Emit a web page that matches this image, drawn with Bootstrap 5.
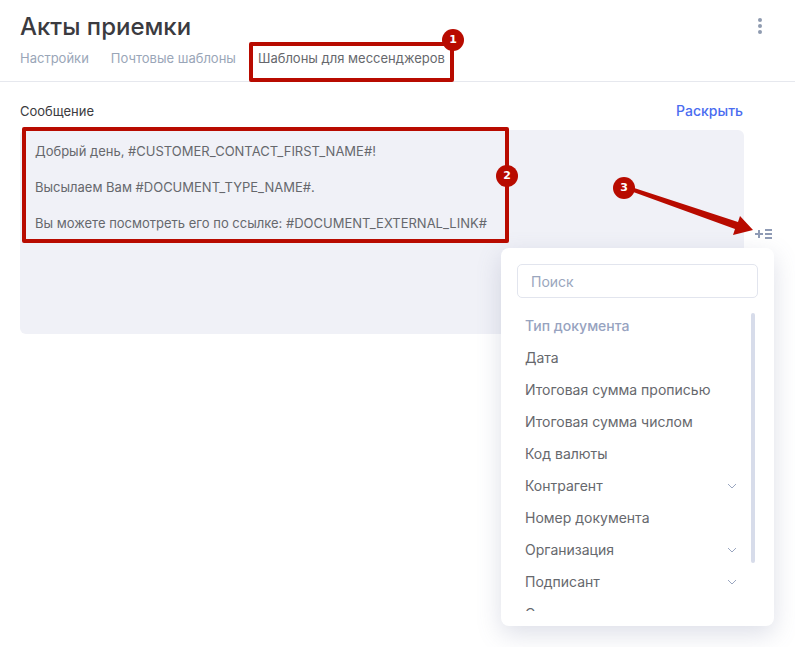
<!DOCTYPE html>
<html lang="ru">
<head>
<meta charset="utf-8">
<title>Акты приемки</title>
<link href="https://cdn.jsdelivr.net/npm/bootstrap@5.3.0/dist/css/bootstrap.min.css" rel="stylesheet">
<style>
html,body{height:647px;overflow:hidden}
body{font-family:Inter,"Noto Sans",sans-serif;font-size:13px;color:#66686d;background:#fff;position:relative}
.pg-head{height:82px;border-bottom:1px solid #e6e8ee;padding:12px 20px 0}
.pg-title{font-size:24px;line-height:29px;font-weight:500;color:#3b3b40;margin:0}
.kebab{width:14px;height:22px;margin:6px 8px 0 0;color:#8f9bb0}
.pg-tabs{margin-top:7px;gap:22px}
.pg-tabs .nav-link{padding:2px 0;font-size:13px;line-height:16px;color:#9aa6b8}
.pg-tabs .nav-link.active{color:#66686d}
.pg-body{padding:21px 51px 0 20px}
.fld-label{font-size:13px;line-height:16px;color:#3b3b40;margin:0}
.fld-link{font-size:14px;line-height:16px;font-weight:500;color:#4a6cf0;text-decoration:none;margin-right:1px}
.msg-area{margin-top:11px;height:204px;background:#f0f1f7;border-radius:6px;padding:12px 15px;line-height:18px;font-size:13px;color:#66686d}
.msg-area p{margin:0 0 18px}
.ins-icon{position:absolute;left:755px;top:228px;color:#8f9bb5}
.ins-menu{position:absolute;left:501px;top:248px;width:273px;height:378px;background:#fff;border-radius:8px;box-shadow:0 8px 24px rgba(100,110,150,.22);padding:16px;z-index:2}
.ins-search{height:34px;font-size:14px;border:1px solid #e2e5ee;border-radius:5px;padding:0 13px;color:#66686d}
.ins-search::placeholder{color:#9aa6bd}
.ins-scroll{position:relative;margin-top:12px;height:301px;overflow:hidden}
.ins-item{height:32px;padding:0 21px 0 8px;font-size:14px;line-height:32px;color:#66686d}
.ins-item.first{color:#97a3c0;font-weight:500}
.ins-item svg{color:#9aa6c0}
.ins-bar{position:absolute;left:234px;top:3px;width:4px;height:250px;border-radius:2px;background:#d7dcea}
.note-box{position:absolute;border:4px solid #b80b00;border-radius:2px;z-index:3}
.note-1{left:249px;top:42px;width:205px;height:40px}
.note-2{left:22px;top:127px;width:487px;height:116px}
.note-dot{position:absolute;width:22px;height:22px;border-radius:50%;background:#b80b00;color:#fff;font-size:11px;font-weight:700;line-height:22px;text-align:center;z-index:4;font-family:"DejaVu Sans",sans-serif}
.dot-1{left:442px;top:29px}
.dot-2{left:496px;top:165px}
.dot-3{left:613px;top:177px}
.note-arrow{position:absolute;left:620px;top:180px;z-index:3}
</style>
</head>
<body>
<header class="pg-head">
  <div class="d-flex justify-content-between align-items-start">
    <h1 class="pg-title">Акты приемки</h1>
    <svg class="kebab" viewBox="0 0 14 22" aria-hidden="true"><circle cx="7" cy="2" r="2" fill="currentColor"/><circle cx="7" cy="8" r="2" fill="currentColor"/><circle cx="7" cy="14" r="2" fill="currentColor"/></svg>
  </div>
  <nav class="nav pg-tabs">
    <a class="nav-link" href="#">Настройки</a>
    <a class="nav-link" href="#">Почтовые шаблоны</a>
    <a class="nav-link active" href="#">Шаблоны для мессенджеров</a>
  </nav>
</header>
<main class="pg-body">
  <div class="d-flex justify-content-between align-items-center">
    <p class="fld-label">Сообщение</p>
    <a class="fld-link" href="#">Раскрыть</a>
  </div>
  <div class="msg-area">
    <p>Добрый день, #CUSTOMER_CONTACT_FIRST_NAME#!</p>
    <p>Высылаем Вам #DOCUMENT_TYPE_NAME#.</p>
    <p>Вы можете посмотреть его по ссылке: #DOCUMENT_EXTERNAL_LINK#</p>
  </div>
</main>
<svg class="ins-icon" width="18" height="12" viewBox="0 0 18 12" aria-hidden="true"><path d="M0 6h8M4 2v8M10 2h7M10 6h7M10 10h7" stroke="currentColor" stroke-width="2" fill="none"/></svg>
<div class="ins-menu">
  <input class="form-control ins-search" type="text" placeholder="Поиск">
  <div class="ins-scroll">
    <div class="ins-item first">Тип документа</div>
    <div class="ins-item">Дата</div>
    <div class="ins-item">Итоговая сумма прописью</div>
    <div class="ins-item">Итоговая сумма числом</div>
    <div class="ins-item">Код валюты</div>
    <div class="ins-item d-flex justify-content-between align-items-center">Контрагент<svg width="10" height="6" viewBox="0 0 10 6" aria-hidden="true"><path d="M1 1l4 4 4-4" stroke="currentColor" fill="none"/></svg></div>
    <div class="ins-item">Номер документа</div>
    <div class="ins-item d-flex justify-content-between align-items-center">Организация<svg width="10" height="6" viewBox="0 0 10 6" aria-hidden="true"><path d="M1 1l4 4 4-4" stroke="currentColor" fill="none"/></svg></div>
    <div class="ins-item d-flex justify-content-between align-items-center">Подписант<svg width="10" height="6" viewBox="0 0 10 6" aria-hidden="true"><path d="M1 1l4 4 4-4" stroke="currentColor" fill="none"/></svg></div>
    <div class="ins-item">Статус</div>
    <div class="ins-bar"></div>
  </div>
</div>
<div class="note-box note-1"></div>
<div class="note-box note-2"></div>
<svg class="note-arrow" width="135" height="60" viewBox="0 0 135 60" aria-hidden="true"><path d="M5 5L5 9L115 49L113 55L133 50L120 36L118 42Z" fill="#b80b00"/></svg>
<div class="note-dot dot-1">1</div>
<div class="note-dot dot-2">2</div>
<div class="note-dot dot-3">3</div>
</body>
</html>
